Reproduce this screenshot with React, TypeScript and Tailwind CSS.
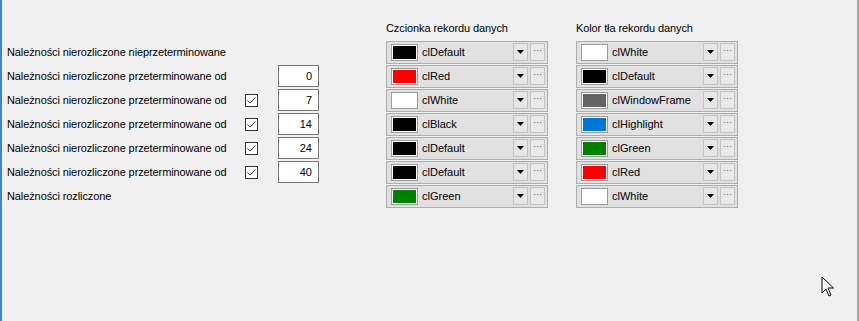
import React from 'react'

const FONT = { fontFamily: '"Liberation Sans", Arial, sans-serif' }

type Row = {
  label: string
  check?: boolean
  days?: string
  font: [string, string]
  back: [string, string]
}

const ROWS: Row[] = [
  { label: 'Należności nierozliczone nieprzeterminowane', font: ['#000000', 'clDefault'], back: ['#ffffff', 'clWhite'] },
  { label: 'Należności nierozliczone przeterminowane od', days: '0', font: ['#ff0000', 'clRed'], back: ['#000000', 'clDefault'] },
  { label: 'Należności nierozliczone przeterminowane od', check: true, days: '7', font: ['#ffffff', 'clWhite'], back: ['#646464', 'clWindowFrame'] },
  { label: 'Należności nierozliczone przeterminowane od', check: true, days: '14', font: ['#000000', 'clBlack'], back: ['#0078d7', 'clHighlight'] },
  { label: 'Należności nierozliczone przeterminowane od', check: true, days: '24', font: ['#000000', 'clDefault'], back: ['#008000', 'clGreen'] },
  { label: 'Należności nierozliczone przeterminowane od', check: true, days: '40', font: ['#000000', 'clDefault'], back: ['#ff0000', 'clRed'] },
  { label: 'Należności rozliczone', font: ['#008000', 'clGreen'], back: ['#ffffff', 'clWhite'] },
]

const ColorCombo = ({ color, name }: { color: string; name: string }) => (
  <div className="flex items-center w-[162px] h-[23px] border border-[#adadad] bg-[#e1e1e1] pl-[4px] pr-[2px]">
    <div className="w-[27px] h-[17px] border border-[#9c9c9c] p-px bg-white">
      <div className="w-full h-full" style={{ backgroundColor: color }} />
    </div>
    <span className="ml-[4px] flex-1 text-[11px] text-black leading-none">{name}</span>
    <div className="w-[15px] h-[18px] border border-[#c4c4c4] bg-[#e6e6e6] flex items-center justify-center">
      <svg width="7" height="4" viewBox="0 0 7 4"><path d="M0 0h7L3.5 4z" fill="#000" /></svg>
    </div>
    <div className="ml-[2px] w-[15px] h-[18px] border border-[#c4c4c4] bg-[#e9e9e9] flex items-center justify-center text-[9px] text-[#606060] leading-none pb-[3px]">
      ···
    </div>
  </div>
)

const CheckBox = () => (
  <div className="w-[13px] h-[13px] border border-[#333333] bg-white flex items-center justify-center">
    <svg width="9" height="7" viewBox="0 0 9 7"><path d="M0.5 3.5l2.5 2.5 5.5-5.5" fill="none" stroke="#444" strokeWidth="1" /></svg>
  </div>
)

export default function App() {
  return (
    <div className="relative w-[859px] h-[321px] bg-[#f0f0f0] border-l-2 border-l-[#3a86d4] border-r-2 border-r-[#a5a5a5] text-black" style={FONT}>
      <div className="pt-[22px] pl-[5px]">
        <div className="flex h-[18px] items-start text-[11px] leading-[12px] tracking-[-0.1px]">
          <div className="w-[379px]" />
          <div className="w-[190px]">Czcionka rekordu danych</div>
          <div>Kolor tła rekordu danych</div>
        </div>
        {ROWS.map((row, i) => (
          <div key={i} className="flex items-center h-[24px]">
            <div className="w-[238px] text-[11px] tracking-[-0.1px] whitespace-nowrap">{row.label}</div>
            <div className="w-[13px]">{row.check && <CheckBox />}</div>
            <div className="w-[20px]" />
            <div className="w-[41px]">
              {row.days !== undefined && (
                <div className="h-[22px] border border-[#7a7a7a] bg-white text-[11px] flex items-center justify-end pr-[6px]">{row.days}</div>
              )}
            </div>
            <div className="w-[67px]" />
            <ColorCombo color={row.font[0]} name={row.font[1]} />
            <div className="w-[28px]" />
            <ColorCombo color={row.back[0]} name={row.back[1]} />
          </div>
        ))}
      </div>
      <svg className="absolute left-[819px] top-[276px]" width="14" height="22" viewBox="0 0 14 22">
        <path d="M1 1v16l4-4 3 7 2-1-3-7h5.5z" fill="#fff" stroke="#000" strokeWidth="1" strokeLinejoin="round" />
      </svg>
    </div>
  )
}
